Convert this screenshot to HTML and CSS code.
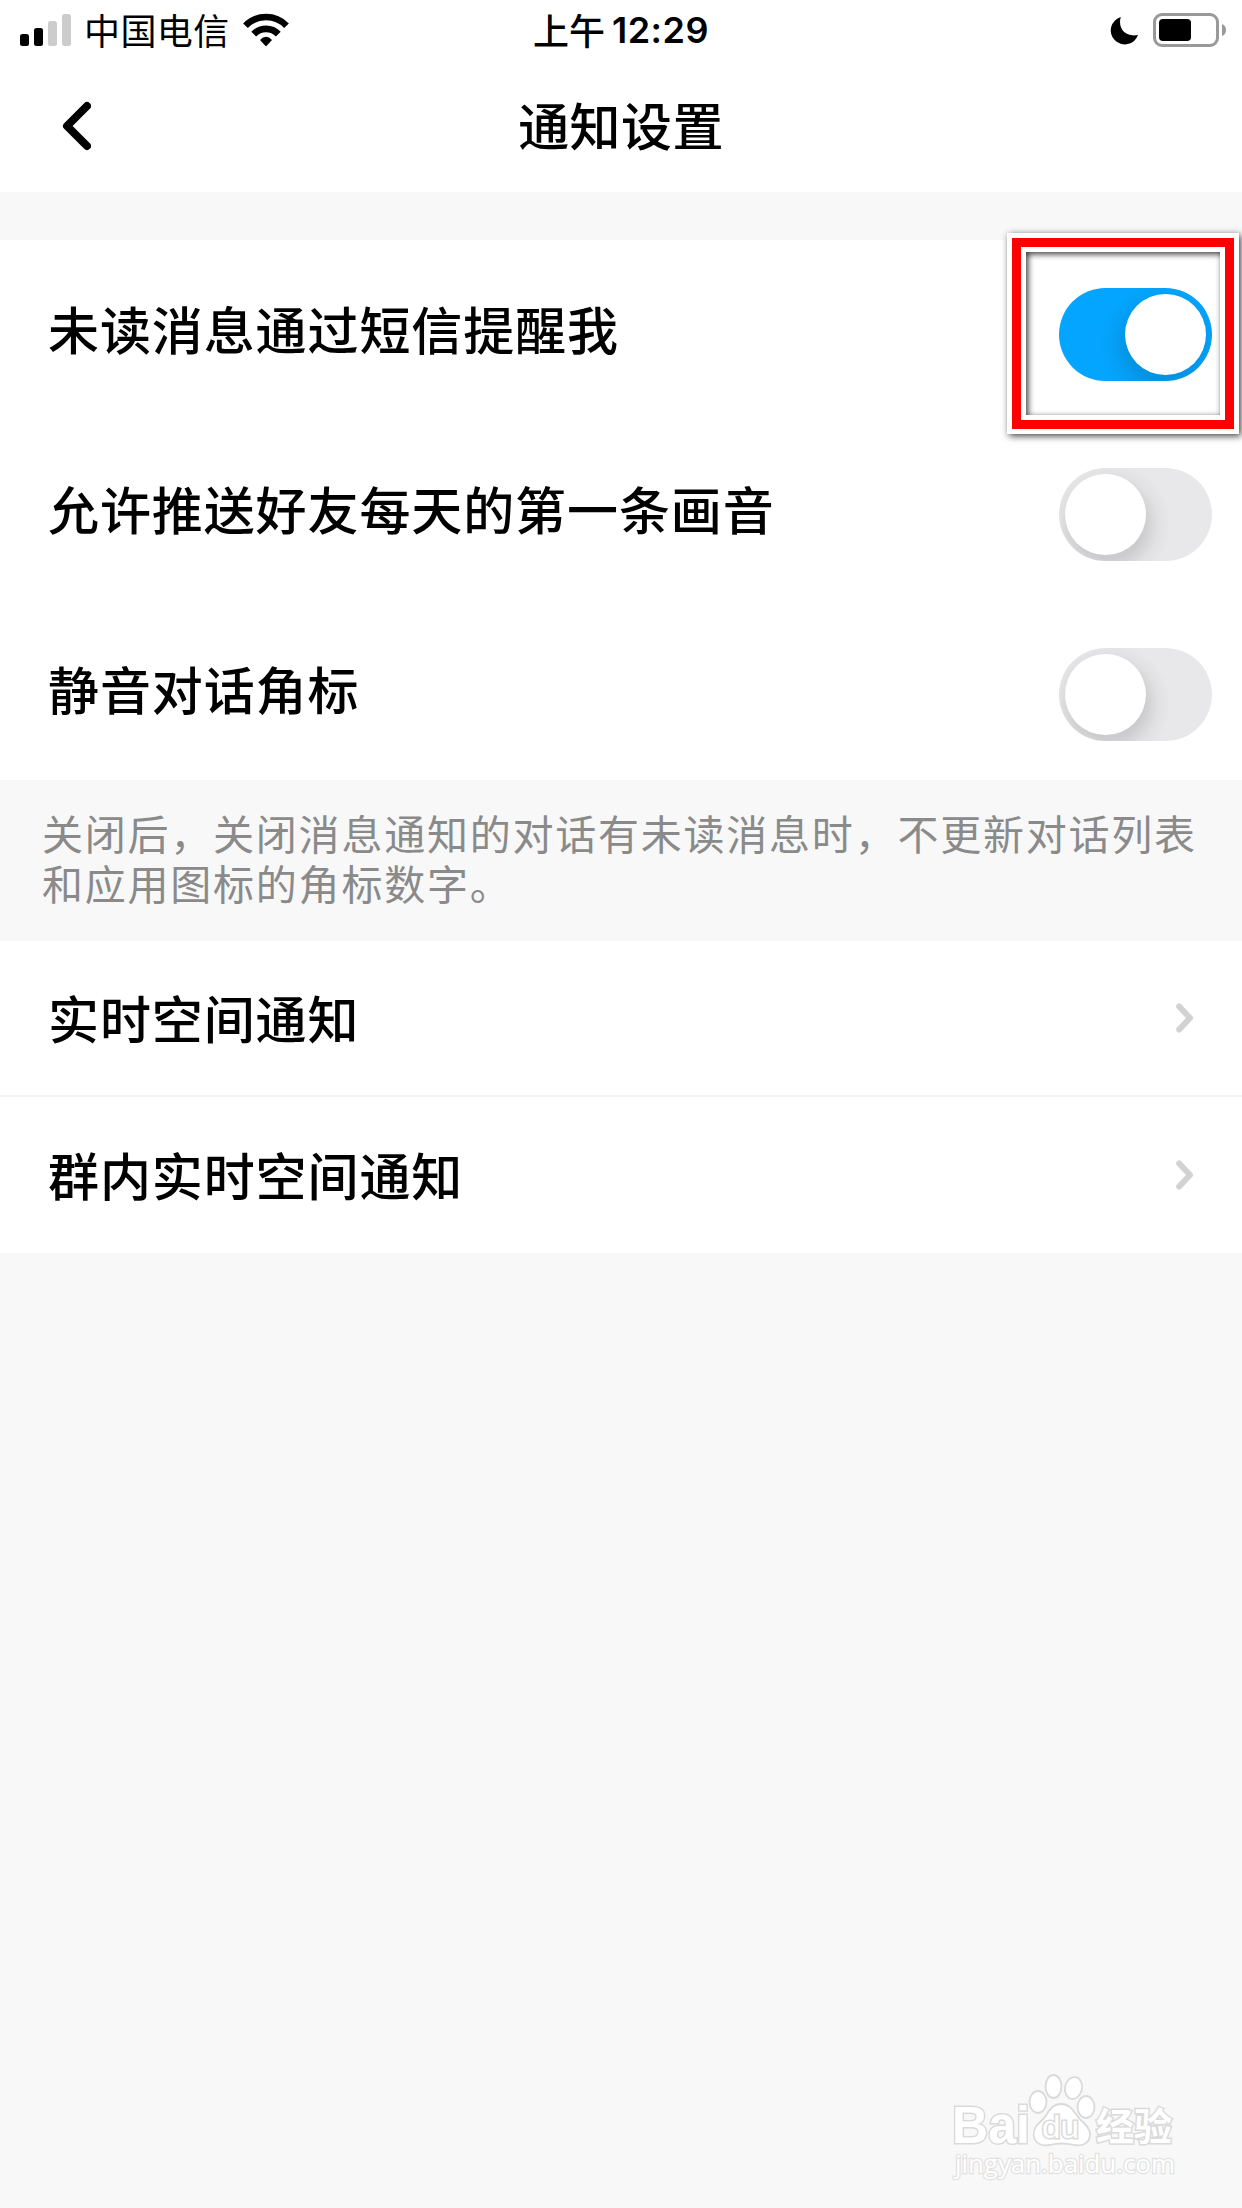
FILE: index.html
```html
<!DOCTYPE html>
<html lang="zh-CN">
<head>
<meta charset="utf-8">
<title>通知设置</title>
<link rel="stylesheet" href="styles.css">
</head>
<body>
<div class="screen">
  <header class="top">
    <div class="status">
      <div class="status-left">
        <svg class="signal" width="51" height="32" viewBox="0 0 51 32">
          <rect x="0" y="20" width="9" height="12" rx="2.5"/>
          <rect x="14" y="14" width="9" height="18" rx="2.5"/>
          <rect class="dim" x="28" y="7" width="9" height="25" rx="2.5"/>
          <rect class="dim" x="42" y="0" width="9" height="32" rx="2.5"/>
        </svg>
        <span class="carrier">中国电信</span>
        <svg class="wifi" width="46" height="34" viewBox="243 12.5 46 34">
          <path class="arc" d="M245.5 25.2A28.5 28.5 0 0 1 286.500 25.2"/>
          <path class="arc" d="M253.700 33.600A17 17 0 0 1 278.300 33.600"/>
          <path d="M260 39.500Q266 33 272 39.500L266.700 45.300Q266 46 265.300 45.300Z"/>
        </svg>
      </div>
      <div class="time">上午<span class="digits">12:29</span></div>
      <div class="status-right">
        <svg width="28" height="28" viewBox="0 0 28 28"><path d="M10.800 0C7.600 10.500 14.500 20.600 28 18A14 14 0 1 1 10.800 0Z"/></svg>
        <svg width="74" height="34" viewBox="0 0 74 34">
          <rect class="cell" x="1.500" y="1.500" width="63" height="31" rx="7.500"/>
          <rect x="6" y="6" width="32" height="22" rx="4"/>
          <path class="nub" d="M69 11Q73 12.500 73 17T69 23Z"/>
        </svg>
      </div>
    </div>
    <nav class="nav">
      <svg class="back" width="29" height="50" viewBox="62 101 29 50"><path d="M87 106L67 126L87 146"/></svg>
      <h1 class="title">通知设置</h1>
    </nav>
  </header>

  <section class="group">
    <div class="row tall">
      <span class="label">未读消息通过短信提醒我</span>
      <span class="toggle on"><i class="knob"></i><span class="marker"></span></span>
    </div>
    <div class="row tall">
      <span class="label">允许推送好友每天的第一条画音</span>
      <span class="toggle"><i class="knob"></i></span>
    </div>
    <div class="row tall">
      <span class="label">静音对话角标</span>
      <span class="toggle"><i class="knob"></i></span>
    </div>
  </section>

  <p class="note">关闭后，关闭消息通知的对话有未读消息时，不更新对话列表<br>和应用图标的角标数字。</p>

  <section class="group">
    <div class="row link">
      <span class="label">实时空间通知</span>
      <svg class="chevron" width="18" height="30" viewBox="0 0 18 30"><path d="M3.200 3.500L14 15L3.200 26.500"/></svg>
    </div>
    <div class="row link">
      <span class="label">群内实时空间通知</span>
      <svg class="chevron" width="18" height="30" viewBox="0 0 18 30"><path d="M3.200 3.500L14 15L3.200 26.500"/></svg>
    </div>
  </section>

  <svg class="watermark" width="240" height="120" viewBox="945 2065 240 120">
    <text class="brand" x="952" y="2143" textLength="78" lengthAdjust="spacingAndGlyphs">Bai</text>
    <path class="paw" d="M1061 2104C1073 2104 1074 2115 1083 2122C1097 2135 1088 2148 1074 2145Q1062 2142 1050 2145C1034 2148 1028 2133 1040 2122C1049 2115 1049 2104 1061 2104Z"/>
    <ellipse class="paw" cx="1038" cy="2102" rx="8.500" ry="11"/>
    <ellipse class="paw" cx="1053.500" cy="2086.500" rx="8" ry="11.500"/>
    <ellipse class="paw" cx="1073.500" cy="2088" rx="8.500" ry="11" transform="rotate(12 1073.5 2088)"/>
    <ellipse class="paw" cx="1086" cy="2107" rx="8.500" ry="11"/>
    <text class="du" x="1042" y="2138" textLength="37" lengthAdjust="spacingAndGlyphs">du</text>
    <text class="cn" x="1096" y="2140" textLength="76">经验</text>
    <text class="site" x="955" y="2173" textLength="220">jingyan.baidu.com</text>
  </svg>
</div>
</body>
</html>
```

FILE: styles.css
```css
* { box-sizing: border-box; }

body {
  margin: 0;
  background: #f8f8f8;
  color: #000;
  font-family: "Noto Sans CJK SC", sans-serif;
}

svg { display: block; flex: none; }

.screen {
  position: relative;
  width: 1242px;
  height: 2208px;
  overflow: hidden;
}

.top {
  height: 192px;
  margin-bottom: 48px;
  background: #fff;
}

.status {
  display: grid;
  grid-template-columns: 1fr auto 1fr;
  height: 60px;
  padding: 0 15px 0 20px;
  font-size: 36px;
  line-height: 59px;
}

.status-left { display: flex; }
.signal { margin: 14px 13px 0 0; }
.dim { fill: #ccc; }

.carrier {
  width: 146px;
  margin-right: 13px;
  letter-spacing: 0.4px;
  white-space: nowrap;
}

.wifi { margin-top: 12.5px; }
.arc { fill: none; stroke: #000; stroke-width: 6.6; }
.time { display: flex; padding-right: 5px; font-weight: 500; }

.digits {
  margin-left: 7px;
  font: 600 36px/61px Inter, sans-serif;
  letter-spacing: 0.5px;
}

.status-right {
  display: flex;
  justify-content: flex-end;
  gap: 15px;
}

.status-right svg:first-child { margin-top: 17px; }
.status-right svg:last-child { margin-top: 13px; }
.cell { fill: none; stroke: #999; stroke-width: 3; }
.nub { fill: #999; }

.nav {
  display: grid;
  grid-template-columns: 29px 1fr 29px;
  align-items: center;
  height: 132px;
  padding: 0 62px;
}

.back path {
  fill: none;
  stroke: #000;
  stroke-width: 8;
  stroke-linecap: round;
  stroke-linejoin: round;
}

.title {
  margin: 0;
  padding-bottom: 5px;
  text-align: center;
  font-size: 51px;
  font-weight: 500;
  line-height: 76px;
  letter-spacing: 0.4px;
}

.group { background: #fff; }

.row {
  display: flex;
  align-items: center;
  justify-content: space-between;
  padding-left: 48px;
}

.tall { height: 180px; padding-right: 30px; }
.link { height: 154px; padding-right: 48px; }
.link + .link { height: 158px; border-top: 2px solid #f3f3f3; }

.label {
  padding-bottom: 5px;
  font-size: 51px;
  font-weight: 500;
  line-height: 76px;
  letter-spacing: 0.9px;
}

.link .label { padding-bottom: 3px; }

.toggle {
  position: relative;
  display: flex;
  width: 153px;
  height: 93px;
  margin-top: 9px;
  padding: 6px;
  border-radius: 47px;
  background: #e8e8ea;
}

.toggle::before {
  content: "";
  position: absolute;
  inset: 0;
  border-radius: inherit;
  background: radial-gradient(circle 62px at 50px 56px, rgba(0, 0, 0, 0.12) 55%, rgba(0, 0, 0, 0.03) 80%, transparent);
}

.toggle.on { justify-content: flex-end; background: #04a5ff; }

.toggle.on::before {
  background: radial-gradient(circle 62px at 103px 56px, rgba(0, 0, 0, 0.11) 55%, rgba(0, 0, 0, 0.03) 80%, transparent);
}

.knob {
  position: relative;
  width: 81px;
  height: 81px;
  border-radius: 50%;
  background: #fff;
}

.marker {
  position: absolute;
  left: -47px;
  top: -50px;
  width: 222px;
  height: 191px;
  border: 9px solid #f00;
  box-shadow: 0 0 0 5px #fff, 2px 2px 7px 5px rgba(0, 0, 0, 0.75);
}

.marker::before {
  content: "";
  position: absolute;
  inset: 0;
  border: 5px solid #fff;
}

.marker::after {
  content: "";
  position: absolute;
  inset: 5px;
  box-shadow: inset 2px 2px 6px rgba(0, 0, 0, 0.8);
}

.note {
  height: 161px;
  margin: 0;
  padding: 27px 0 0 42px;
  color: #8a8a8a;
  font-size: 41px;
  line-height: 50px;
  letter-spacing: 1.77px;
  white-space: nowrap;
}

.chevron path {
  fill: none;
  stroke: #d2d2d4;
  stroke-width: 6;
  stroke-linecap: round;
  stroke-linejoin: round;
}

.watermark {
  position: absolute;
  right: 57px;
  bottom: 23px;
  fill: #fff;
  stroke: #dadada;
  stroke-width: 2;
}

.watermark text { paint-order: stroke; }
.brand { font: 700 51px "Liberation Sans", sans-serif; stroke-width: 3; }
.paw { stroke-width: 1.8; }
.du { font: 400 31px "Liberation Sans", sans-serif; stroke-width: 3; }
.cn { font: 700 38px "Noto Sans CJK SC", sans-serif; stroke-width: 3; }
.site { font: 400 26px "Open Sans", sans-serif; stroke: #e2e2e2; stroke-width: 2.5; }
```
